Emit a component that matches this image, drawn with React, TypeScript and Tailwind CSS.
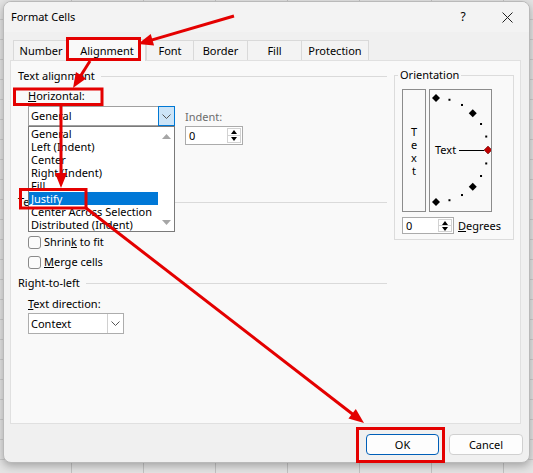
import React from "react";

const RED = "#e40000";

const TABS = [
  { name: "Number", w: "w-[55px]" },
  { name: "Alignment", w: "w-[78px]", active: true },
  { name: "Font", w: "w-[47px]" },
  { name: "Border", w: "w-[54px]" },
  { name: "Fill", w: "w-[54px]" },
  { name: "Protection", w: "w-[68px]" },
];

const ITEMS = [
  "General",
  "Left (Indent)",
  "Center",
  "Right (Indent)",
  "Fill",
  "Justify",
  "Center Across Selection",
  "Distributed (Indent)",
];

function Chevron() {
  return (
    <svg width="9" height="5" viewBox="0 0 9 5">
      <path d="M0.5 0.5 L4.5 4.5 L8.5 0.5" fill="none" stroke="#555" strokeWidth="1" />
    </svg>
  );
}

function Tri({ down = false, color = "#000", w = 7, h = 4 }: { down?: boolean; color?: string; w?: number; h?: number }) {
  return (
    <svg width={w} height={h} viewBox={`0 0 ${w} ${h}`}>
      <polygon points={down ? `0,0 ${w},0 ${w / 2},${h}` : `0,${h} ${w},${h} ${w / 2},0`} fill={color} />
    </svg>
  );
}

function Group({ label }: { label: string }) {
  return (
    <div className="flex items-center h-[16px]">
      <span>{label}</span>
      <span className="flex-1 h-px bg-[#dadada] ml-[6px]" />
    </div>
  );
}

function Check({ children }: { children: React.ReactNode }) {
  return (
    <div className="flex items-center h-[20px]">
      <span className="w-[13px] h-[13px] rounded-[3px] border border-[#8a8a8a] bg-[#fbfbfb]" />
      <span className="ml-[3px]">{children}</span>
    </div>
  );
}

function Spin({ size }: { size: string }) {
  return (
    <div className={`flex border border-[#ababab] bg-white ${size}`}>
      <span className="flex-1 pl-[3px] flex items-center">0</span>
      <div className="w-[14px] my-[1px] mr-[1px] flex flex-col border border-[#d2d2d2]">
        <div className="flex-1 flex items-center justify-center border-b border-[#d2d2d2]">
          <Tri w={6} h={4} />
        </div>
        <div className="flex-1 flex items-center justify-center">
          <Tri down w={6} h={4} />
        </div>
      </div>
    </div>
  );
}

function DropList() {
  return (
    <div className="absolute z-20 top-[20px] left-0 w-[147px] h-[106px] border border-[#7a7a7a] bg-white flex">
      <div className="w-[129px] flex flex-col">
        {ITEMS.map((it) => (
          <div
            key={it}
            className={`h-[13px] leading-[13px] pl-[2px] whitespace-nowrap ${
              it === "Justify" ? "bg-[#0078d7] text-white" : ""
            }`}
          >
            {it}
          </div>
        ))}
      </div>
      <div className="flex-1 flex flex-col items-center justify-between pt-[7px] pb-[6px]">
        <Tri color="#a6a6a6" w={9} h={5} />
        <Tri down color="#a6a6a6" w={9} h={5} />
      </div>
    </div>
  );
}

function Arrow({ x1, y1, x2, y2 }: { x1: number; y1: number; x2: number; y2: number }) {
  const dx = x2 - x1;
  const dy = y2 - y1;
  const len = Math.hypot(dx, dy);
  const ux = dx / len;
  const uy = dy / len;
  const hl = 15;
  const hw = 6;
  const bx = x2 - ux * hl;
  const by = y2 - uy * hl;
  const pts = `${x2},${y2} ${bx - uy * hw},${by + ux * hw} ${bx + uy * hw},${by - ux * hw}`;
  return (
    <g>
      <line x1={x1} y1={y1} x2={bx + ux * 2} y2={by + uy * 2} stroke={RED} strokeWidth={3} />
      <polygon points={pts} fill={RED} />
    </g>
  );
}

function Dial() {
  // semicircle of marks around the "Text" origin
  const cx = 6;
  const cy = 60;
  const r = 52;
  const marks = [];
  for (let a = 90; a >= -90; a -= 15) {
    const rad = (a * Math.PI) / 180;
    const x = cx + r * Math.cos(rad);
    const y = cy - r * Math.sin(rad);
    if (a === 0) {
      marks.push(<polygon key={a} points={`${x},${y - 4} ${x + 4},${y} ${x},${y + 4} ${x - 4},${y}`} fill="#c00000" stroke="#5a0000" strokeWidth="0.5" />);
    } else if (Math.abs(a) === 90 || Math.abs(a) === 45) {
      marks.push(<polygon key={a} points={`${x},${y - 4} ${x + 4},${y} ${x},${y + 4} ${x - 4},${y}`} fill="#000" />);
    } else {
      marks.push(<rect key={a} x={x - 1} y={y - 1} width="2" height="2" fill="#000" />);
    }
  }
  return (
    <svg width="61" height="121" viewBox="0 0 61 121" className="absolute left-0 top-0">
      <line x1="29" y1="60.5" x2="54" y2="60.5" stroke="#000" strokeWidth="1" />
      {marks}
    </svg>
  );
}

export default function App() {
  return (
    <div className="relative w-[533px] h-[473px] overflow-hidden pl-[3px] pt-[1px] bg-[#e3e3e3] bg-[linear-gradient(to_right,#c2c2c2_1px,transparent_1px),linear-gradient(to_bottom,#cbcbcb_1px,transparent_1px)] bg-[size:72px_20px] bg-[position:71px_19px] font-['Noto_Sans',sans-serif] text-[11px] leading-[16px] text-black">
      <div className="w-[527px] h-[462px] rounded-[8px] border border-[#b9b9b9] bg-[#f0f0f0] shadow-[0_3px_8px_rgba(0,0,0,0.28)] flex flex-col overflow-hidden">
        {/* title bar */}
        <div className="h-[30px] shrink-0 flex items-center bg-[#f3f3f3] pl-[7px]">
          <span>Format Cells</span>
          <div className="ml-auto flex h-full">
            <div className="w-[44px] flex items-center justify-center text-[12px]">?</div>
            <div className="w-[44px] flex items-center justify-center">
              <svg width="11" height="11" viewBox="0 0 11 11">
                <path d="M0.5 0.5 L10.5 10.5 M10.5 0.5 L0.5 10.5" stroke="#222" strokeWidth="1" />
              </svg>
            </div>
          </div>
        </div>

        {/* tabs */}
        <div className="mt-[8px] h-[20px] shrink-0 flex items-end pl-[9px] relative z-10">
          {TABS.map((t, i) => (
            <div
              key={t.name}
              className={`${t.w} flex items-center justify-center border-t border-l border-[#d9d9d9] ${
                i === TABS.length - 1 ? "border-r" : ""
              } ${t.active ? "h-[22px] -mb-px bg-[#f9f9f9] border-r" : "h-[20px] bg-[#f3f3f3]"}`}
            >
              {t.name}
            </div>
          ))}
        </div>

        {/* tab page */}
        <div className="ml-[6px] w-[511px] h-[364px] shrink-0 border border-[#e0e0e0] bg-[#f9f9f9] flex">
          <div className="w-[376px] pl-[7px] pt-[7px] flex flex-col">
            <Group label="Text alignment" />
            <div className="mt-[4px] pl-[10px]">
              <span className="underline">H</span>orizontal:
            </div>
            <div className="mt-[2px] pl-[10px] flex">
              <div className="relative w-[147px]">
                <div className="h-[20px] flex border border-[#a0a0a0] bg-white">
                  <span className="flex-1 pl-[2px] flex items-center">General</span>
                  <span className="w-[17px] h-[20px] -my-px -mr-px border border-[#0078d4] bg-[#cce4f7] flex items-center justify-center">
                    <Chevron />
                  </span>
                </div>
                {/* vertical alignment controls, covered by the open list */}
                <div className="h-[61px]" />
                <DropList />
              </div>
              <div className="ml-[10px] pt-[3px]">
                <div className="text-[#6d6d6d]">Indent:</div>
                <div className="mt-[1px]">
                  <Spin size="w-[58px] h-[19px]" />
                </div>
              </div>
            </div>

            <div className="mt-[7px]">
              <Group label="Text control" />
            </div>
            <div className="mt-[2px] pl-[10px]">
              <div className="h-[20px]" />
              <Check>
                Shrin<span className="underline">k</span> to fit
              </Check>
              <Check>
                <span className="underline">M</span>erge cells
              </Check>
            </div>

            <div className="mt-[3px]">
              <Group label="Right-to-left" />
            </div>
            <div className="mt-[5px] pl-[10px]">
              <span className="underline">T</span>ext direction:
            </div>
            <div className="mt-[1px] pl-[10px]">
              <div className="w-[96px] h-[21px] flex border border-[#adadad] bg-white">
                <span className="flex-1 pl-[2px] flex items-center">Context</span>
                <span className="w-[16px] border-l border-[#d0d0d0] flex items-center justify-center">
                  <Chevron />
                </span>
              </div>
            </div>
          </div>

          <fieldset className="ml-[7px] mt-[6px] w-[120px] h-[173px] border border-[#dcdcdc] px-[7px]">
            <legend className="-ml-[4px] px-[2px] leading-[16px]">Orientation</legend>
            <div className="mt-[6px] flex gap-[3px]">
              <div className="w-[24px] h-[123px] border border-[#8c8c8c] flex flex-col items-center justify-center leading-[13px]">
                <span>T</span>
                <span>e</span>
                <span>x</span>
                <span>t</span>
              </div>
              <div className="relative w-[63px] h-[123px] border border-[#8c8c8c]">
                <Dial />
                <span className="absolute left-[5px] top-[52px]">Text</span>
              </div>
            </div>
            <div className="mt-[5px] flex items-center">
              <Spin size="w-[52px] h-[17px]" />
              <span className="ml-[4px]">
                <span className="underline">D</span>egrees
              </span>
            </div>
          </fieldset>
        </div>

        {/* buttons */}
        <div className="mt-[10px] flex justify-end gap-[10px] pr-[6px]">
          <button className="w-[73px] h-[21px] rounded-[4px] border border-[#005fb8] bg-[#fdfdfd] flex items-center justify-center">
            OK
          </button>
          <button className="w-[74px] h-[21px] rounded-[4px] border border-[#d0d0d0] bg-[#fdfdfd] flex items-center justify-center">
            Cancel
          </button>
        </div>
      </div>

      {/* red annotations */}
      <svg className="absolute left-0 top-0 z-50 pointer-events-none" width="533" height="473" viewBox="0 0 533 473">
        <g fill="none" stroke={RED} strokeWidth="3">
          <rect x="67.5" y="38.5" width="72" height="21" />
          <rect x="14.5" y="89" width="87.5" height="15.5" />
          <rect x="20.5" y="189.5" width="65.5" height="18.5" />
          <rect x="357.5" y="428.5" width="86" height="33" />
        </g>
        <Arrow x1={234} y1={16} x2={138} y2={44} />
        <Arrow x1={90} y1={61} x2={73} y2={88} />
        <Arrow x1={61} y1={106} x2={61} y2={188} />
        <Arrow x1={86} y1={208} x2={364} y2={423} />
      </svg>
    </div>
  );
}
